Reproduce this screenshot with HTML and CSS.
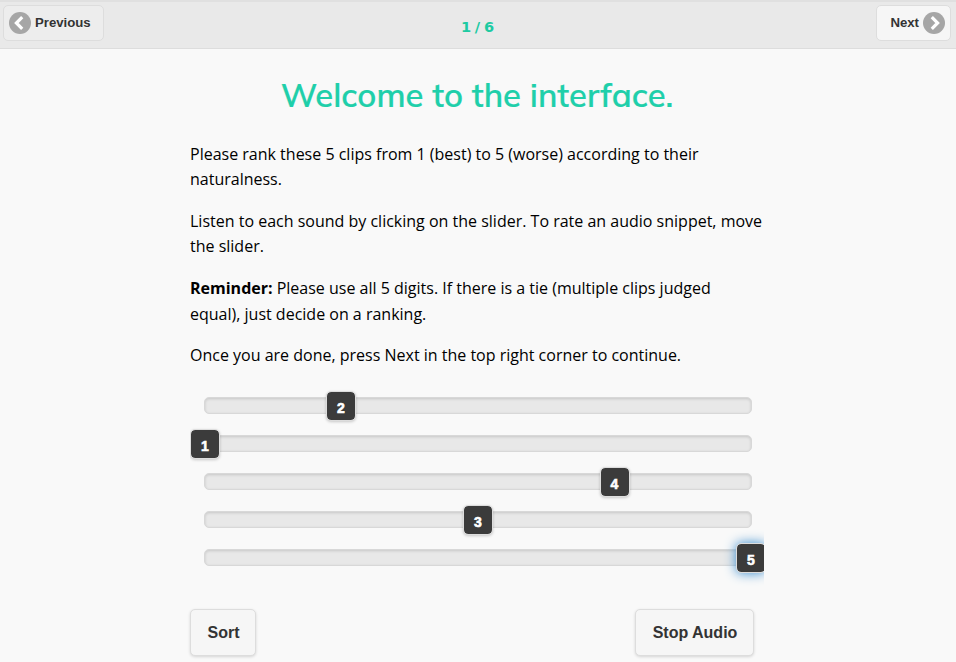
FILE: index.html
```html
<!DOCTYPE html>
<html lang="en">
<head>
<meta charset="utf-8">
<title>Listening test</title>
<link rel="stylesheet" href="styles.css">
</head>
<body>
<header class="header">
  <button class="nav prev"><svg class="arrow" viewBox="0 0 22 22"><circle cx="11" cy="11" r="11"/><path d="M13.2 5.2 7.4 11l5.8 5.8"/></svg><span>Previous</span></button>
  <div class="progress">1 / 6</div>
  <button class="nav next"><span>Next</span><svg class="arrow" viewBox="0 0 22 22"><circle cx="11" cy="11" r="11"/><path d="M8.8 5.2 14.6 11l-5.8 5.8"/></svg></button>
</header>
<main class="content">
  <h1>Welcome to the interface.</h1>
  <p>Please rank these 5 clips from 1 (best) to 5 (worse) according to their naturalness.</p>
  <p>Listen to each sound by clicking on the slider. To rate an audio snippet, move the slider.</p>
  <p><b>Reminder:</b> Please use all 5 digits. If there is a tie (multiple clips judged equal), just decide on a ranking.</p>
  <p>Once you are done, press Next in the top right corner to continue.</p>
  <div class="sliders">
    <div class="slider"><div class="track"><span class="handle" style="left:24.9%">2</span></div></div>
    <div class="slider"><div class="track"><span class="handle" style="left:0%">1</span></div></div>
    <div class="slider"><div class="track"><span class="handle" style="left:75%">4</span></div></div>
    <div class="slider"><div class="track"><span class="handle" style="left:50%">3</span></div></div>
    <div class="slider"><div class="track"><span class="handle focus" style="left:100%">5</span></div></div>
  </div>
  <div class="actions"><button class="btn sort">Sort</button><button class="btn stop">Stop Audio</button></div>
</main>
</body>
</html>
```

FILE: styles.css
```css
* { box-sizing: border-box; }
body { margin: 0; height: 662px; overflow: hidden; background: #f9f9f9; color: #000; font: 16px/25.6px "Open Sans", sans-serif; }
.header { height: 49px; padding: 3px 5px 0 3px; display: grid; grid-template-columns: 1fr auto 1fr; background: #e9e9e9; border-top: 2px solid #e0e0e0; border-bottom: 1px solid #ddd; }
button { font-family: "Liberation Sans", sans-serif; font-weight: bold; color: #333; background: #f6f6f6; border: 1px solid #ddd; border-radius: 5px; box-shadow: 0 1px 3px rgba(0,0,0,.15); text-shadow: 0 1px 0 #f3f3f3; }
.nav { height: 36px; display: flex; align-items: center; font-size: 13.2px; padding: 0 5px; }
.nav span { position: relative; top: -1px; }
.prev { width: 101px; justify-self: start; gap: 4px; background: #ededed; box-shadow: none; }
.next { width: 75px; justify-self: end; justify-content: flex-end; gap: 4px; box-shadow: none; }
.arrow { width: 22px; height: 22px; flex: none; fill: #a6a6a6; }
.arrow path { fill: none; stroke: #fff; stroke-width: 3.2; }
.progress { padding-left: 1px; color: #1ecaa2; font: bold 14.6px/44px "DejaVu Sans", sans-serif; word-spacing: -1.3px; }
.content { width: 576px; margin: 0 auto; }
h1 { margin: 20px 2px 21.6px 0; color: #1fcfaa; text-align: center; font: 600 32.8px/51px Muli, Mulish, Lato, sans-serif; white-space: nowrap; -webkit-text-stroke: .2px #1fcfaa; }
p { margin: 0 0 16px; padding-right: 3px; }
.sliders { width: 574px; margin-top: 18px; padding: 0 12px 10px 14px; overflow: hidden; }
.slider { height: 38px; display: flex; align-items: center; }
.track { position: relative; width: 548px; height: 17px; background: #e8e8e8; border: 1px solid #d8d8d8; border-radius: 5px; box-shadow: inset 0 1px 3px rgba(0,0,0,.15); }
.handle { position: absolute; top: -7px; width: 30px; height: 30px; margin-left: -15.01px; border: 1px solid #ddd; border-radius: 5px; background: #3b3b3b; background-clip: padding-box; box-shadow: 0 1px 3px rgba(0,0,0,.2); color: #fff; font: bold 14px/33px "Liberation Sans", sans-serif; text-align: center; -webkit-text-stroke: .6px #fff; }
.focus { box-shadow: 0 0 12px #38c; }
.actions { display: flex; justify-content: space-between; margin: 22px 12px 0 0; }
.btn { height: 47px; padding: 1px 0 0 1px; font-size: 16px; }
.sort { width: 66px; }
.stop { width: 119px; }
```
